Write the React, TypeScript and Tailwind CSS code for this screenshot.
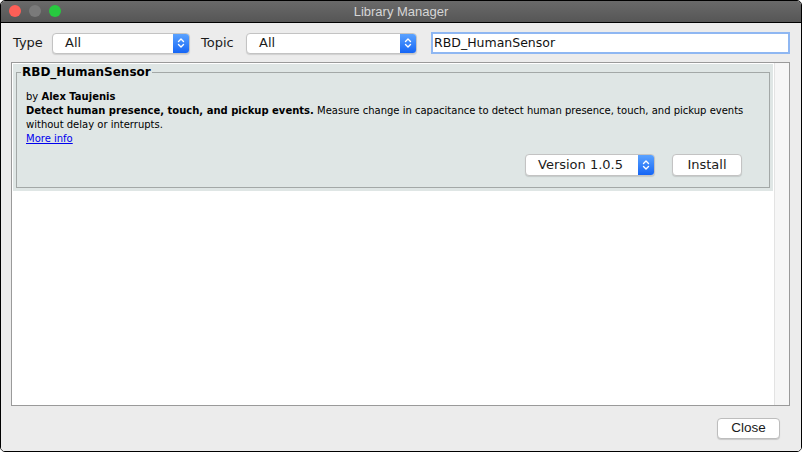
import React from "react";

const UpDown = () => (
  <svg width="8" height="12" viewBox="0 0 8 12" fill="none" stroke="white" strokeWidth="1.4" strokeLinecap="round" strokeLinejoin="round">
    <path d="M1.5 4.5 L4 2 L6.5 4.5" />
    <path d="M1.5 7.5 L4 10 L6.5 7.5" />
  </svg>
);

const Select = ({ label, className }: { label: string; className: string }) => (
  <div
    className={`flex h-[21px] items-stretch rounded-[4px] border border-[#c3c3c3] bg-white shadow-[0_1px_1px_rgba(0,0,0,0.12)] ${className}`}
  >
    <span className="flex flex-1 items-center pl-[12px] text-[13px] text-[#1b1b1b]">{label}</span>
    <span className="flex w-[16px] items-center justify-center rounded-r-[3px] bg-gradient-to-b from-[#5aa2ff] to-[#1465f5]">
      <UpDown />
    </span>
  </div>
);

export default function App() {
  return (
    <div className="h-[452px] w-[802px] bg-white" style={{ fontFamily: '"DejaVu Sans", Verdana, sans-serif' }}>
      <div className="flex h-[452px] w-[802px] flex-col overflow-hidden rounded-[5px] border border-black">
        {/* title bar */}
        <div className="relative flex h-[22px] shrink-0 items-center justify-center border-b border-black bg-gradient-to-b from-[#6a6a6a] to-[#565656]">
          <div className="absolute left-[8px] top-[4px] flex gap-[8px]">
            <span className="h-[12px] w-[12px] rounded-full bg-[#fd5f57]" />
            <span className="h-[12px] w-[12px] rounded-full bg-[#7a7a7a]" />
            <span className="h-[12px] w-[12px] rounded-full bg-[#27c93f]" />
          </div>
          <span className="text-[13px] text-[#d6d6d6]" style={{ fontFamily: '"Liberation Sans", Arial, sans-serif' }}>
            Library Manager
          </span>
        </div>

        {/* body */}
        <div className="flex flex-1 flex-col bg-[#ececec] pl-[10px] pr-[11px] pt-[9px] pb-[12px]">
          <div className="flex h-[22px] items-center">
            <span className="ml-[2px] w-[39px] text-[13px] text-[#1b1b1b]">Type</span>
            <Select label="All" className="w-[138px]" />
            <span className="ml-[11px] w-[45px] text-[13px] text-[#1b1b1b]">Topic</span>
            <Select label="All" className="w-[171px]" />
            <div className="ml-[14px] flex h-[22px] flex-1 items-center border-2 border-[#8fb7f2] bg-white pl-[1px] text-[12.5px] text-[#111]">
              RBD_HumanSensor
            </div>
          </div>

          {/* list */}
          <div className="mt-[8px] flex flex-1 border border-[#9a9a9a] bg-white">
            <div className="flex-1 p-[1px]">
              <div className="bg-[#dfe6e5] px-[3px] pb-[3px]">
                <fieldset className="border border-[#a3a8a7] px-[9px] pb-[11px] pt-[10px] text-[10px] leading-[14px] text-black">
                  <legend className="-ml-[5px] px-[1px] text-[12px] font-bold leading-[16px]">RBD_HumanSensor</legend>
                  <div className="whitespace-nowrap">
                    by <b>Alex Taujenis</b>
                  </div>
                  <div className="whitespace-nowrap">
                    <b>Detect human presence, touch, and pickup events.</b> Measure change in capacitance to detect human
                    presence, touch, and pickup events
                  </div>
                  <div className="whitespace-nowrap">without delay or interrupts.</div>
                  <div className="text-[#0000ee] underline">More info</div>
                  <div className="mt-[8px] flex justify-end pr-[18px]">
                    <div className="flex h-[22px] w-[130px] items-stretch rounded-[4px] border border-[#c3c3c3] bg-white shadow-[0_1px_1px_rgba(0,0,0,0.12)]">
                      <span className="flex flex-1 items-center pl-[12px] text-[13px] text-[#1b1b1b]">Version 1.0.5</span>
                      <span className="flex w-[16px] items-center justify-center rounded-r-[3px] bg-gradient-to-b from-[#5aa2ff] to-[#1465f5]">
                        <UpDown />
                      </span>
                    </div>
                    <div className="ml-[17px] flex h-[22px] w-[70px] items-center justify-center rounded-[4px] border border-[#c3c3c3] bg-white text-[13px] text-[#1b1b1b] shadow-[0_1px_1px_rgba(0,0,0,0.12)]">
                      Install
                    </div>
                  </div>
                </fieldset>
              </div>
            </div>
            <div className="w-[15px] border-l border-[#e3e3e3] bg-[#f6f6f6]" />
          </div>

          <div className="mt-[12px] flex justify-end pr-[10px]">
            <div
              className="flex h-[21px] w-[63px] items-center justify-center rounded-[4px] border border-[#bdbdbd] bg-white text-[13.5px] text-[#1b1b1b] shadow-[0_1px_1px_rgba(0,0,0,0.15)]"
              style={{ fontFamily: '"Liberation Sans", Arial, sans-serif' }}
            >
              Close
            </div>
          </div>
        </div>
      </div>
    </div>
  );
}
